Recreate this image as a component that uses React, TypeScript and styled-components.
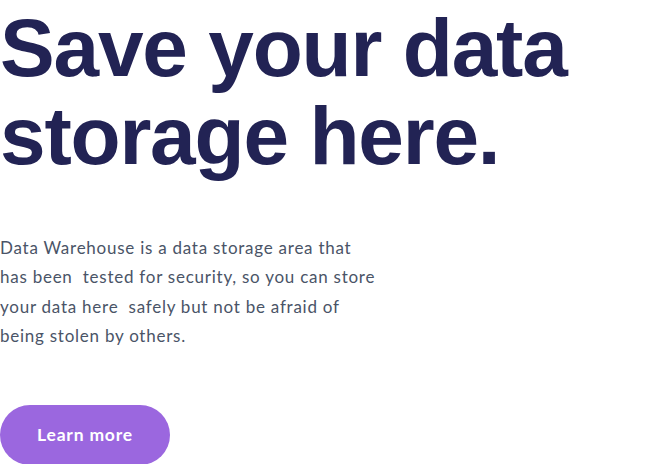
import React from "react";
import styled, { createGlobalStyle } from "styled-components";

const Global = createGlobalStyle`
  html, body { margin: 0; padding: 0; background: #ffffff; }
  body { overflow: hidden; }
`;

const Hero = styled.section`
  display: flex;
  flex-direction: column;
  align-items: flex-start;
  padding: 4px 0 0 0;
`;

const Title = styled.h1`
  margin: 0;
  font-family: "Liberation Sans", Arial, sans-serif;
  font-weight: 700;
  font-size: 82px;
  line-height: 88px;
  letter-spacing: -1.2px;
  color: #222354;
`;

const Lead = styled.p`
  margin: 53px 0 0 0;
  width: 400px;
  font-family: Lato, "Open Sans", sans-serif;
  font-size: 17px;
  line-height: 29.4px;
  letter-spacing: 0.75px;
  color: #4a5467;
  white-space: pre-wrap;
`;

const Button = styled.button`
  margin-top: 54px;
  width: 170px;
  height: 60px;
  padding: 0;
  border: none;
  border-radius: 30px;
  background: #9b67df;
  color: #ffffff;
  font-family: Lato, "Open Sans", sans-serif;
  font-weight: 700;
  font-size: 17.5px;
  letter-spacing: 0.8px;
  cursor: pointer;
`;

export default function App() {
  return (
    <>
      <Global />
      <Hero>
        <Title>
          Save your data
          <br />
          storage here.
        </Title>
        <Lead>
          {"Data Warehouse is a data storage area that\nhas been  tested for security, so you can store\nyour data here  safely but not be afraid of\nbeing stolen by others."}
        </Lead>
        <Button>Learn more</Button>
      </Hero>
    </>
  );
}
